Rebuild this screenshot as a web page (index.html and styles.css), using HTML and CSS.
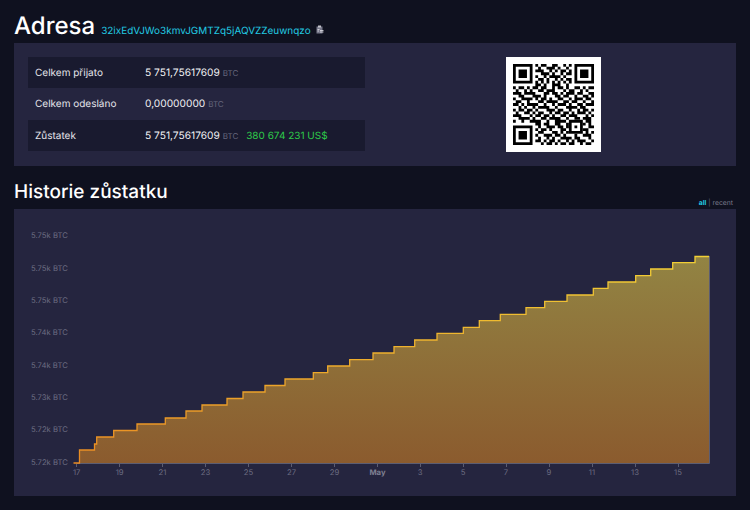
FILE: index.html
```html
<!DOCTYPE html>
<html lang="cs">
<head>
  <meta charset="UTF-8">
  <meta name="viewport" content="width=device-width, initial-scale=1.0">
  <title>Adresa 32ixEdVJWo3kmvJGMTZq5jAQVZZeuwnqzo</title>
  <link rel="stylesheet" href="styles.css">
</head>
<body>
  <div class="title-row">
    <h1>Adresa</h1>
    <a class="address" href="#">32ixEdVJWo3kmvJGMTZq5jAQVZZeuwnqzo</a>
    <svg class="copy-icon" viewBox="0 0 8 9" width="8" height="9">
      <path class="copy-board" d="M.5 1.500h6v7h-6z"/>
      <path class="copy-clip" d="M2 .5h3v2H2z"/>
      <path class="copy-lines" d="M1.500 4.500h2M1.500 6h1.500M4 5.500h3.500M4 7h3.500"/>
    </svg>
  </div>

  <section class="card summary">
    <table class="stats">
      <tr>
        <td class="stat-label">Celkem přijato</td>
        <td class="stat-value">5 751,75617609 <span class="unit">BTC</span></td>
      </tr>
      <tr>
        <td class="stat-label">Celkem odesláno</td>
        <td class="stat-value">0,00000000 <span class="unit">BTC</span></td>
      </tr>
      <tr>
        <td class="stat-label">Zůstatek</td>
        <td class="stat-value">5 751,75617609 <span class="unit">BTC</span> <span class="usd">380 674 231 US$</span></td>
      </tr>
    </table>
    <div class="qr-wrap">
      <svg class="qr" viewBox="-2.500 -2.500 34 34" width="95" height="95">
        <path class="qr-solid" fill-rule="evenodd" d="M0 0h7v7H0zM1 1v5h5V1zM2 2h3v3H2zM22 0h7v7h-7zM23 1v5h5V1zM24 2h3v3h-3zM0 22h7v7H0zM1 23v5h5v-5zM2 24h3v3H2zM20 20h5v5h-5zM21 21v3h3v-3zM22 22h1v1h-1z"/>
        <path class="qr-runs" d="M8 .5h1m1 0h2m2 0h2m2 0h1m1 0h1
          M9 1.500h1m2 0h3m1 0h1m2 0h1
          M8 2.500h3m2 0h1m1 0h1m1 0h2m1 0h1
          M10 3.500h3m1 0h1m2 0h1m1 0h2
          M8 4.500h1m2 0h1m1 0h4m1 0h1
          M9 5.500h2m1 0h1m2 0h1m1 0h1m1 0h2
          M8 6.500h1m1 0h1m1 0h1m1 0h1m1 0h1m1 0h1m1 0h1
          M8 7.500h2m1 0h1m2 0h3m2 0h1
          M0 8.500h1m1 0h2m1 0h1m1 0h2m1 0h2m2 0h1m1 0h2m1 0h1m2 0h2m1 0h1m1 0h2
          M1 9.500h1m2 0h1m1 0h1m2 0h2m1 0h3m3 0h1m1 0h2m2 0h1m1 0h1
          M0 10.500h3m1 0h4m3 0h2m1 0h2m1 0h1m1 0h3m1 0h2m2 0h2
          M2 11.500h2m3 0h3m1 0h1m3 0h2m1 0h2m2 0h1m2 0h2m1 0h1
          M0 12.500h1m2 0h4m1 0h1m1 0h2m1 0h1m2 0h2m2 0h1m1 0h3m1 0h2
          M1 13.500h2m2 0h1m3 0h2m1 0h4m2 0h2m1 0h2m2 0h1m2 0h1
          M0 14.500h2m1 0h1m1 0h4m2 0h1m2 0h1m1 0h3m1 0h1m2 0h2m1 0h3
          M2 15.500h1m1 0h1m2 0h1m1 0h4m2 0h1m3 0h4m1 0h2
          M0 16.500h1m1 0h2m1 0h2m1 0h1m3 0h3m1 0h2m2 0h1m2 0h1m1 0h2m1 0h1
          M1 17.500h1m2 0h2m1 0h1m1 0h2m2 0h1m1 0h2m1 0h2m1 0h1m1 0h3m1 0h1
          M0 18.500h3m3 0h1m1 0h2m1 0h2m1 0h1m2 0h2m1 0h3m3 0h1m1 0h1
          M2 19.500h4m1 0h1m2 0h2m1 0h4m2 0h1m2 0h2m1 0h3
          M0 20.500h1m2 0h1m2 0h4m2 0h1m2 0h4M26 20.500h2
          M8 21.500h2m1 0h2m2 0h2m2 0h1M25 21.500h1m1 0h1
          M9 22.500h1m2 0h3m1 0h2m1 0h1M27 22.500h2
          M8 23.500h1m1 0h2m1 0h1m3 0h2M25 23.500h2
          M9 24.500h2m3 0h2m1 0h1m1 0h1M26 24.500h1m1 0h1
          M8 25.500h1m2 0h3m1 0h2m1 0h1m3 0h1m2 0h3
          M9 26.500h1m2 0h1m1 0h1m2 0h4m1 0h2m3 0h1
          M8 27.500h2m1 0h1m1 0h2m1 0h1m2 0h1m1 0h1m1 0h3m2 0h1
          M10 28.500h1m1 0h2m1 0h1m1 0h2m1 0h2m2 0h1m1 0h2"/>
      </svg>
    </div>
  </section>

  <div class="title-row history-row">
    <h2>Historie zůstatku</h2>
    <div class="range"><a class="range-on" href="#">all</a> | <a href="#">recent</a></div>
  </div>

  <section class="card chart-card">
    <svg class="chart" viewBox="14 209 722 287" width="722" height="287">
      <defs>
        <linearGradient id="area-fill" gradientUnits="userSpaceOnUse" x1="0" y1="256" x2="0" y2="463">
          <stop offset="0" stop-color="#928443"/>
          <stop offset="1" stop-color="#8b5b2e"/>
        </linearGradient>
        <linearGradient id="line-stroke" gradientUnits="userSpaceOnUse" x1="0" y1="256" x2="0" y2="463">
          <stop offset="0" stop-color="#f2d036"/>
          <stop offset="1" stop-color="#e98a22"/>
        </linearGradient>
      </defs>

      <g class="y-labels">
        <text x="31" y="238">5.75k BTC</text>
        <text x="31" y="270.500">5.75k BTC</text>
        <text x="31" y="303">5.75k BTC</text>
        <text x="31" y="335">5.74k BTC</text>
        <text x="31" y="367.500">5.74k BTC</text>
        <text x="31" y="399.500">5.73k BTC</text>
        <text x="31" y="432">5.72k BTC</text>
        <text x="31" y="464.500">5.72k BTC</text>
      </g>

      <path class="area" fill="url(#area-fill)" d="M80 463.500V450H94.500V444H96.700V437H113.700V430.500H137V424H165.300V418H186V411H202V405H227V398.500H243V392H265V385.500H285V379H313.300V372.700H327.700V366H349.700V359.700H373V353H394V346.700H414.700V340H437V333.300H463.300V327.300H479.300V320.700H500.300V314.300H526V307.700H544.700V301.300H567V295H593.300V288.300H608V282H635.700V275.700H650.700V269H672.700V262.700H695V256.300H709V463.500Z"/>
      <path class="axis" d="M76.500 463.500H709.500V256"/>
      <path class="ticks" d="M76.500 464v3M119.500 464v3M162.500 464v3M205.500 464v3M248.500 464v3M291.500 464v3M334.500 464v3M377.500 464v3M420.500 464v3M463.500 464v3M506.500 464v3M549.500 464v3M592.500 464v3M635.500 464v3M678.500 464v3"/>
      <path class="line" stroke="url(#line-stroke)" d="M73.500 463H79.500V450H94.500V444H96.700V437H113.700V430.500H137V424H165.300V418H186V411H202V405H227V398.500H243V392H265V385.500H285V379H313.300V372.700H327.700V366H349.700V359.700H373V353H394V346.700H414.700V340H437V333.300H463.300V327.300H479.300V320.700H500.300V314.300H526V307.700H544.700V301.300H567V295H593.300V288.300H608V282H635.700V275.700H650.700V269H672.700V262.700H695V256.500H709"/>

      <g class="x-labels">
        <text x="76.700" y="475">17</text>
        <text x="119.700" y="475">19</text>
        <text x="162.500" y="475">21</text>
        <text x="205.500" y="475">23</text>
        <text x="248.500" y="475">25</text>
        <text x="291.500" y="475">27</text>
        <text x="334.500" y="475">29</text>
        <text class="x-month" x="377.500" y="475">May</text>
        <text x="420" y="475">3</text>
        <text x="463" y="475">5</text>
        <text x="506" y="475">7</text>
        <text x="549" y="475">9</text>
        <text x="592" y="475">11</text>
        <text x="635" y="475">13</text>
        <text x="678" y="475">15</text>
      </g>
    </svg>
  </section>
</body>
</html>
```

FILE: styles.css
```css
body {
  font-family: Inter, "Liberation Sans", sans-serif;
  margin: 0;
  padding: 0 14px;
  background: #0f111f;
  color: #e4e4ea;
  font-size: 10px;
  overflow: hidden;
  text-rendering: geometricPrecision;
}
a {
  text-decoration: none;
}
h1,
h2 {
  margin: 0;
  color: #fff;
  font-weight: 500;
}
h1 {
  font-size: 24px;
}
h2 {
  font-size: 19px;
}
.title-row {
  display: flex;
  align-items: baseline;
  gap: 6px;
  height: 43px;
  box-sizing: border-box;
  padding-top: 11px;
}
.address {
  color: #22cbe3;
  font-size: 9.950px;
}
.copy-icon {
  margin: 4px 0 0 -1px;
  align-self: center;
}
.copy-board {
  fill: #77788a;
}
.copy-clip {
  fill: #c4c4cc;
}
.copy-lines {
  stroke: #e4e4ea;
  stroke-width: 0.8;
  fill: none;
}
.card {
  background: #25253f;
}
.summary {
  display: grid;
  grid-template-columns: 1fr 1fr;
  gap: 20px;
  padding: 14px;
  height: 123px;
  box-sizing: border-box;
}
.stats {
  border-collapse: collapse;
  width: 100%;
  height: 94px;
  align-self: start;
}
.stats td {
  box-sizing: border-box;
  padding: 1px 7px 0;
  height: 31px;
}
.stats tr:nth-child(odd) {
  background: #191a2f;
}
.stat-label {
  width: 110px;
}
.stat-value {
  color: #f2f2f5;
  font-size: 10.200px;
}
.unit {
  color: #66677d;
  font-size: 8px;
}
.usd {
  color: #2ecb4a;
  font-size: 10px;
  margin-left: 5px;
}
.qr-wrap {
  display: flex;
  justify-content: center;
}
.qr {
  background: #fff;
}
.qr-solid {
  fill: #000;
}
.qr-runs {
  stroke: #000;
  stroke-width: 1;
  fill: none;
}
.history-row {
  justify-content: space-between;
  padding-top: 14px;
}
.range {
  align-self: flex-end;
  color: #66677d;
  font-size: 6.800px;
  padding: 0 3px 2px 0;
}
.range a {
  color: #7a7b8c;
}
.range .range-on {
  color: #22cbe3;
  font-weight: 700;
}
.chart-card {
  height: 287px;
}
.chart {
  display: block;
}
.y-labels text,
.x-labels text {
  fill: #6d6e83;
  font-size: 7.700px;
}
.x-labels text {
  text-anchor: middle;
}
.x-labels .x-month {
  font-weight: 700;
  fill: #7f8092;
}
.axis,
.ticks {
  stroke: #5c5d72;
  stroke-width: 1;
  fill: none;
}
.line {
  stroke-width: 1.300;
  fill: none;
}
```
